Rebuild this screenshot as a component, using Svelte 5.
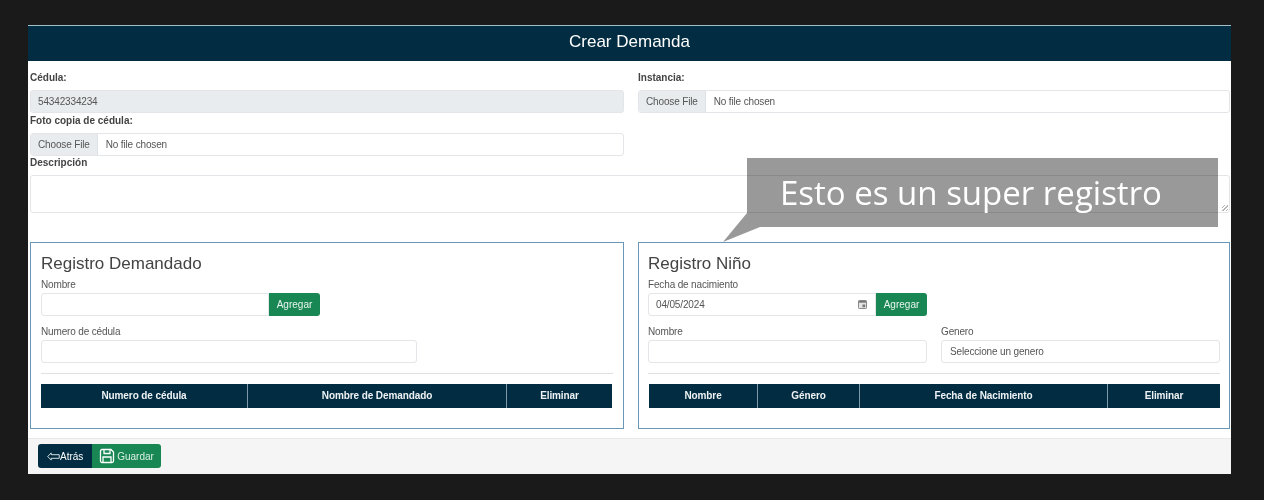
<script>
  let demandado = ["Numero de cédula", "Nombre de Demandado", "Eliminar"];
  let nino = ["Nombre", "Género", "Fecha de Nacimiento", "Eliminar"];
</script>

<main class="page">
  <div class="card">
    <header class="head">Crear Demanda</header>

    <section class="body">
      <div class="top">
        <div class="col">
          <label class="lbl" for="cedula">Cédula:</label>
          <input id="cedula" class="ctl disabled" value="54342334234" disabled />
          <div class="lbl second">Foto copia de cédula:</div>
          <div class="ctl file">
            <span class="pick">Choose File</span>
            <span>No file chosen</span>
          </div>
        </div>
        <div class="col">
          <div class="lbl">Instancia:</div>
          <div class="ctl file">
            <span class="pick">Choose File</span>
            <span>No file chosen</span>
          </div>
        </div>
      </div>

      <div class="lbl third">Descripción</div>
      <textarea class="area"></textarea>

      <div class="panels">
        <div class="panel">
          <h2>Registro Demandado</h2>
          <div class="cap">Nombre</div>
          <div class="row">
            <input class="ctl grow" />
            <button class="add">Agregar</button>
          </div>
          <div class="cap next">Numero de cédula</div>
          <input class="ctl half" />
          <hr />
          <div class="thead dem">
            {#each demandado as col}
              <div class="th">{col}</div>
            {/each}
          </div>
        </div>

        <div class="panel kid-panel">
          <h2>Registro Niño</h2>
          <div class="cap">Fecha de nacimiento</div>
          <div class="row">
            <div class="ctl grow date">
              <span>04/05/2024</span>
              <svg width="9" height="9" viewBox="0 0 10 10">
                <rect x="0.500" y="0.500" width="9" height="9" rx="1" fill="#e4e4e4" stroke="#777" />
                <rect x="1" y="1" width="8" height="2" fill="#777" />
                <rect x="5" y="5" width="3" height="3" fill="#777" />
              </svg>
            </div>
            <button class="add">Agregar</button>
          </div>
          <div class="pair">
            <div>
              <div class="cap next">Nombre</div>
              <input class="ctl" />
            </div>
            <div>
              <div class="cap next">Genero</div>
              <div class="ctl select">Seleccione un genero</div>
            </div>
          </div>
          <hr />
          <div class="thead kid">
            {#each nino as col}
              <div class="th">{col}</div>
            {/each}
          </div>
        </div>
      </div>
    </section>

    <footer class="foot">
      <button class="btn back">
        <svg width="13" height="9" viewBox="0 0 17 10" fill="none" stroke="#fff" stroke-width="1" preserveAspectRatio="none">
          <path d="M5.500 1 1 5l4.500 4V7H16V3H5.500z" />
        </svg>Atrás
      </button>
      <button class="btn save">
        <svg width="16" height="16" viewBox="0 0 16 16" fill="none" stroke="#fff" stroke-width="1.300">
          <path d="M1.500 3A1.500 1.500 0 0 1 3 1.500h9L14.500 4v9a1.500 1.500 0 0 1-1.500 1.500H3A1.500 1.500 0 0 1 1.500 13z" />
          <path d="M5 1.500V5.500h6V1.500M4 14.500V9h8v5.500" />
        </svg>Guardar
      </button>
    </footer>

    <div class="callout">
      <span>Esto es un super registro</span>
    </div>
  </div>
</main>

<style>
  :global(body) {
    margin: 0;
    background: #1a1a1a;
  }

  .page {
    height: 500px;
    padding: 25px 33px 0 28px;
    box-sizing: border-box;
    font-family: "Liberation Sans", Arial, sans-serif;
    font-size: 10px;
    letter-spacing: -0.150px;
    color: #555;
  }

  .card {
    position: relative;
    height: 449px;
    background: #fff;
    display: flex;
    flex-direction: column;
  }

  .head {
    height: 36px;
    box-sizing: border-box;
    border-top: 1px solid #9fc0c8;
    background: #012c41;
    color: #fff;
    font-size: 17px;
    letter-spacing: 0;
    line-height: 31px;
    text-align: center;
  }

  .body {
    flex: 1;
    padding: 0 1px 0 2px;
  }

  .top {
    display: grid;
    grid-template-columns: 594px 592px;
    gap: 14px;
  }

  .lbl {
    display: block;
    font-weight: bold;
    letter-spacing: 0;
    line-height: 12px;
    padding-top: 11px;
    margin-bottom: 6px;
    color: #444;
  }

  .lbl.second {
    padding-top: 2px;
  }

  .lbl.third {
    padding-top: 1px;
  }

  .ctl {
    display: block;
    width: 100%;
    height: 23px;
    box-sizing: border-box;
    border: 1px solid #e3e5e8;
    border-radius: 3px;
    background: #fff;
    padding: 0 7px;
    font: inherit;
    letter-spacing: inherit;
    color: #555;
    line-height: 21px;
  }

  .disabled {
    background: #e9ecef;
    opacity: 1;
  }

  .file {
    display: flex;
    padding: 0;
    overflow: hidden;
  }

  .pick {
    background: #e9ecef;
    padding: 0 7px;
    border-right: 1px solid #dee2e6;
    margin-right: 8px;
  }

  .area {
    display: block;
    width: 100%;
    height: 38px;
    box-sizing: border-box;
    border: 1px solid #e3e5e8;
    border-radius: 3px;
    margin: 0;
    resize: none;
    background:
      repeating-linear-gradient(135deg, #fff 0 1.500px, #b5b5b5 1.500px 2.500px) no-repeat right 1px bottom 1px / 6px 6px;
  }

  .panels {
    display: grid;
    grid-template-columns: 594px 592px;
    gap: 14px;
    margin-top: 29px;
  }

  .panel {
    height: 187px;
    box-sizing: border-box;
    border: 1px solid #6a97b8;
    padding: 11px 10px 0;
  }

  .kid-panel {
    padding: 11px 9px 0;
  }

  h2 {
    margin: 0 0 5px;
    font-size: 17px;
    font-weight: normal;
    letter-spacing: 0;
    line-height: 20px;
    color: #444;
  }

  .cap {
    line-height: 12px;
    margin-top: 1px;
    margin-bottom: 2px;
  }

  .cap.next {
    margin-top: 10px;
  }

  .row {
    display: flex;
    width: 279px;
  }

  .grow {
    flex: 1;
    min-width: 0;
    border-radius: 3px 0 0 3px;
  }

  .add {
    width: 51px;
    height: 23px;
    padding: 0;
    border: 0;
    border-radius: 0 3px 3px 0;
    background: #198754;
    color: #e8f4ee;
    font: inherit;
    letter-spacing: 0;
  }

  .half {
    width: 376px;
  }

  hr {
    border: 0;
    border-top: 1px solid #dfe1e4;
    margin: 10px 0;
  }

  .thead {
    display: grid;
    height: 24px;
    background: #012c41;
  }

  .dem {
    margin-right: 1px;
    grid-template-columns: 206px 259px 1fr;
  }

  .kid {
    margin-left: 1px;
    grid-template-columns: 108px 102px 248px 1fr;
  }

  .th {
    color: #eef2f4;
    font-weight: bold;
    letter-spacing: -0.100px;
    text-align: center;
    line-height: 23px;
    border-left: 1px solid #7d98a8;
  }

  .th:first-child {
    border-left: 0;
  }

  .date {
    display: flex;
    align-items: center;
    justify-content: space-between;
    padding-right: 8px;
  }

  .pair {
    display: grid;
    grid-template-columns: 279px 279px;
    gap: 14px;
  }

  .select {
    padding-left: 8px;
  }

  .foot {
    height: 36px;
    box-sizing: border-box;
    background: #f5f5f5;
    border-top: 1px solid #e8e8e8;
    padding: 5px 10px;
    display: flex;
  }

  .btn {
    display: flex;
    align-items: center;
    height: 24px;
    border: 0;
    padding: 0;
    color: #fff;
    font: inherit;
    letter-spacing: 0;
  }

  .back {
    width: 54px;
    padding-left: 9px;
    background: #012c41;
    border-radius: 3px 0 0 3px;
  }

  .save {
    width: 69px;
    justify-content: center;
    gap: 2px;
    background: #198754;
    border-radius: 0 3px 3px 0;
    color: #d8eee3;
  }

  .callout {
    position: absolute;
    left: 719px;
    top: 133px;
    width: 471px;
    height: 69px;
    padding-left: 33px;
    box-sizing: border-box;
    color: #fff;
    font-family: "Open Sans", sans-serif;
    font-size: 33px;
    letter-spacing: 0;
    line-height: 70px;
    white-space: nowrap;
  }

  /* box and tail in one shape, multiply lets the textarea lines show through */
  .callout::before {
    content: "";
    position: absolute;
    left: -24px;
    top: 0;
    width: 495px;
    height: 84px;
    background: #999;
    mix-blend-mode: multiply;
    clip-path: polygon(24px 0, 495px 0, 495px 69px, 37px 69px, 0 84px, 24px 55px);
  }

  .callout span {
    position: relative;
  }
</style>
